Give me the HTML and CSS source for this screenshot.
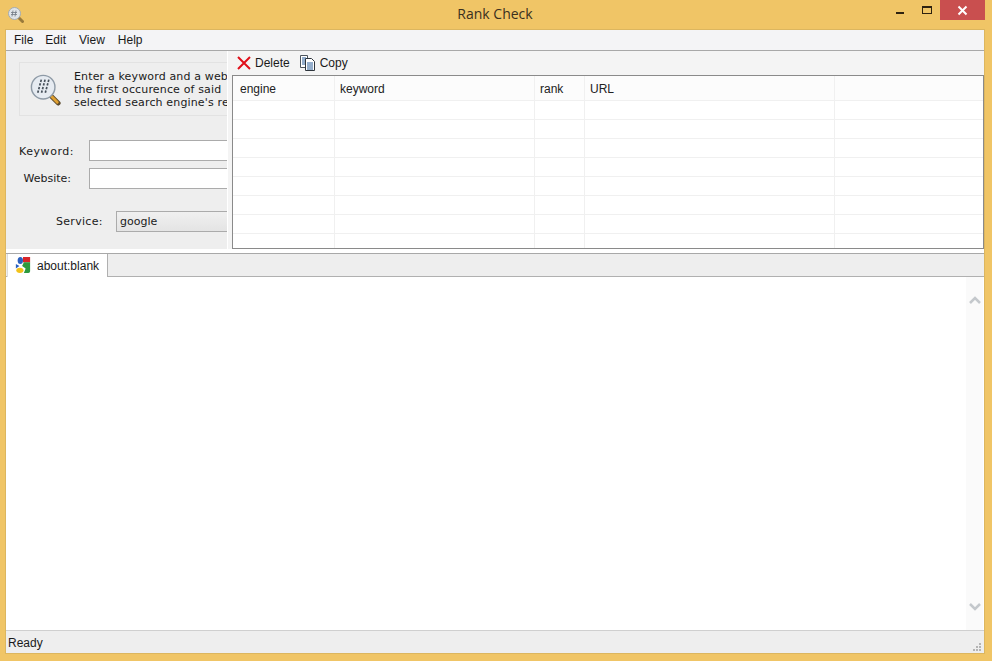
FILE: index.html
```html
<!DOCTYPE html>
<html>
	<head>
		<meta charset="UTF-8">
		<title>Rank Check</title>
		<link rel="stylesheet" href="styles.css">
	</head>
	<body>
		<div class="window">
			<div class="titlebar">
				<svg class="app-icon" width="16" height="16" viewBox="0 0 16 16">
					<path d="M10.500 10.500l4 4" stroke="#9a7a3a" stroke-width="3" stroke-linecap="round"/>
					<circle cx="6.500" cy="6.500" r="6" fill="#dfe4e8" stroke="#a3abb2"/>
					<path d="M5 3.500l-1 6M8 3.500l-1 6M3 5.500h6M3 7.500h6" stroke="#717a84" stroke-width=".8"/>
				</svg>
				<div class="title">Rank Check</div>
				<div class="controls">
					<div class="btn-min"><span></span></div>
					<div class="btn-max"><span></span></div>
					<div class="btn-close">
						<svg width="11" height="11" viewBox="0 0 11 11"><path d="M1.500 1.500l8 8M9.500 1.500l-8 8" stroke="#fff" stroke-width="2"/></svg>
					</div>
				</div>
			</div>

			<div class="client">
				<ul class="menu">
					<li>File</li>
					<li>Edit</li>
					<li>View</li>
					<li>Help</li>
				</ul>

				<div class="top">
					<div class="left">
						<div class="info">
							<svg class="info-icon" width="32" height="32" viewBox="0 0 34 34">
								<path d="M22 23l8 8" stroke="#5b4a2c" stroke-width="5" stroke-linecap="round"/>
								<path d="M23 24l6 6" stroke="#e0a030" stroke-width="3" stroke-linecap="round"/>
								<circle cx="14" cy="14" r="12.500" fill="#e6ebf1" stroke="#8e9aa6" stroke-width="1.500"/>
								<path d="M12 6l-4 15M16 6l-4 15M20 6l-4 15" stroke="#46505a" stroke-width="1.800" stroke-dasharray="2.500 1.500"/>
							</svg>
							<div class="info-text">
								<div>Enter a keyword and a website to find</div>
								<div>the first occurence of said</div>
								<div>selected search engine's results</div>
							</div>
						</div>
						<div class="form">
							<label class="label-key">Keyword:</label>
							<div class="field"></div>
							<label class="label-site">Website:</label>
							<div class="field"></div>
						</div>
						<div class="service">
							<label>Service:</label>
							<div class="select">google</div>
						</div>
					</div>

					<div class="right">
						<div class="toolbar">
							<div class="tool">
								<svg width="16" height="16" viewBox="0 0 16 16"><path d="M2 2l12 12M14 2L2 14" stroke="#e0101a" stroke-width="2"/></svg>
								Delete
							</div>
							<div class="tool">
								<svg width="16" height="18" viewBox="0 0 16 18">
									<path d="M.500 1.500h7v12h-7z" fill="#fff" stroke="#4c545c"/>
									<path d="M5.500 4.500h6l3 3v9h-9z" fill="#fff" stroke="#2e353c"/>
									<path d="M2 4h4M2 6h3M2 8h3M2 10h3M7 9h6M7 11h6M7 13h6M7 15h6" stroke="#2a5f9a"/>
								</svg>
								Copy
							</div>
						</div>
						<table class="results">
							<tr class="head">
								<td class="c1">engine</td>
								<td class="c2">keyword</td>
								<td class="c3">rank</td>
								<td class="c4">URL</td>
								<td></td>
							</tr>
							<tr><td></td><td></td><td></td><td></td><td></td></tr>
							<tr><td></td><td></td><td></td><td></td><td></td></tr>
							<tr><td></td><td></td><td></td><td></td><td></td></tr>
							<tr><td></td><td></td><td></td><td></td><td></td></tr>
							<tr><td></td><td></td><td></td><td></td><td></td></tr>
							<tr><td></td><td></td><td></td><td></td><td></td></tr>
							<tr><td></td><td></td><td></td><td></td><td></td></tr>
							<tr class="last"><td></td><td></td><td></td><td></td><td></td></tr>
						</table>
					</div>
				</div>

				<div class="tabs">
					<div class="tab">
						<svg width="16" height="16" viewBox="0 0 18 18">
							<rect x="9" y="0" width="8" height="6" fill="#d8262a"/>
							<path d="M10 6h7v10a2 2 0 0 1-2 2h-5l2-5-4-3z" fill="#2c9a3e"/>
							<ellipse cx="6" cy="4" rx="3" ry="4" fill="#2a5fc0"/>
							<path d="M1 8l4 2-4 3z" fill="#2a5fc0"/>
							<ellipse cx="5.500" cy="15" rx="4" ry="3" fill="#f2c21a"/>
						</svg>
						about:blank
					</div>
				</div>

				<div class="browser">
					<div class="page"></div>
					<div class="scroll">
						<svg width="12" height="8" viewBox="0 0 12 8"><path d="M1 7l5-5 5 5" fill="none" stroke="#c4c8cc" stroke-width="2.500"/></svg>
						<svg width="12" height="8" viewBox="0 0 12 8"><path d="M1 1l5 5 5-5" fill="none" stroke="#c4c8cc" stroke-width="2.500"/></svg>
					</div>
				</div>

				<div class="status">
					<span>Ready</span>
					<svg class="grip" width="10" height="10" viewBox="0 0 10 10"><path d="M7 1h2v2H7zM4 4h2v2H4zM7 4h2v2H7zM1 7h2v2H1zM4 7h2v2H4zM7 7h2v2H7z" fill="#b4b4b4"/></svg>
				</div>
			</div>
		</div>
	</body>
</html>
```

FILE: styles.css
```css
* {
	margin: 0;
	padding: 0;
	box-sizing: border-box;
}

html, body {
	width: 992px;
	height: 661px;
	overflow: hidden;
}

body {
	font-family: "DejaVu Sans", sans-serif;
	font-size: 11px;
	color: #1a1a1a;
}

ul, li {
	list-style: none;
}

.window {
	height: 661px;
	background: #f0c566;
	padding: 0 8px 8px 6px;
	display: flex;
	flex-direction: column;
}

.titlebar {
	height: 30px;
	flex: none;
	display: flex;
	align-items: flex-start;
	position: relative;
}

.app-icon {
	margin: 7px 0 0 2px;
}

.title {
	position: absolute;
	left: 0;
	right: 0;
	top: 4px;
	text-align: center;
	font-family: "Open Sans", sans-serif;
	font-size: 14px;
	line-height: 20px;
	color: #3a3020;
}

.controls {
	margin-left: auto;
	margin-right: -1px;
	display: flex;
}

.btn-min, .btn-max {
	width: 26px;
	height: 20px;
	display: flex;
	justify-content: center;
}

.btn-min span {
	width: 8px;
	height: 2px;
	margin-top: 12px;
	margin-right: 2px;
	background: #2e2210;
}

.btn-max span {
	width: 10px;
	height: 8px;
	margin-top: 6px;
	border: 1px solid #2e2210;
	border-top-width: 2px;
}

.btn-close {
	width: 45px;
	height: 20px;
	background: #c94f4f;
	display: flex;
	align-items: center;
	justify-content: center;
}

.client {
	flex: 1;
	min-height: 0;
	background: #fff;
	box-shadow: 0 0 0 1px #dcb65f;
	display: flex;
	flex-direction: column;
}

.menu {
	height: 21px;
	flex: none;
	display: flex;
	background: #f4f4f6;
	border-bottom: 1px solid #a8a8a8;
	padding-left: 8px;
	gap: 13px;
	font-family: "Liberation Sans", sans-serif;
	font-size: 12px;
	line-height: 20px;
}

.menu li:first-child {
	margin-right: -1px;
}

.top {
	height: 198px;
	flex: none;
	display: flex;
	background: #eeeeee;
	padding-left: 1px;
}

.left {
	width: 220px;
	flex: none;
	overflow: hidden;
	padding: 11px 0 0 12px;
	white-space: nowrap;
}

.info {
	width: 320px;
	height: 54px;
	border: 1px solid #e2e2e2;
	display: flex;
	align-items: center;
	padding-left: 10px;
	gap: 12px;
}

.info-icon {
	flex: none;
	margin-top: 2px;
}

.info-text {
	line-height: 13px;
	letter-spacing: .15px;
}

.form {
	margin-top: 24px;
	display: grid;
	grid-template-columns: 70px 300px;
	row-gap: 7px;
	align-items: center;
}

.form label {
	text-align: right;
	padding-right: 15px;
}

.form .label-key {
	letter-spacing: .55px;
	padding-top: 1px;
}

.form .label-site {
	padding-right: 18px;
}

.field {
	height: 21px;
	background: #fff;
	border: 1px solid #ababab;
}

.service {
	margin-top: 22px;
	display: flex;
	align-items: center;
}

.service label {
	width: 85px;
	flex: none;
	padding-left: 37px;
	letter-spacing: .3px;
}

.select {
	width: 300px;
	height: 21px;
	flex: none;
	margin-left: 12px;
	border: 1px solid #ababab;
	background: linear-gradient(#f0f0f0, #e4e4e4);
	line-height: 19px;
	padding-left: 3px;
}

.right {
	width: 757px;
	flex: none;
	padding-left: 4px;
	display: flex;
	flex-direction: column;
	background: #f4f4f4;
	border-left: 1px solid #fff;
}

.toolbar {
	height: 24px;
	flex: none;
	display: flex;
	align-items: center;
	gap: 10px;
	padding-left: 4px;
	font-family: "Liberation Sans", sans-serif;
	font-size: 12px;
}

.tool {
	display: flex;
	align-items: center;
	gap: 3px;
}

.tool + .tool {
	gap: 4px;
}

.results {
	width: 752px;
	table-layout: fixed;
	border-collapse: separate;
	border-spacing: 0;
	background: #fff;
	border: 1px solid #8a8a8a;
	font-family: "Liberation Sans", sans-serif;
	font-size: 12px;
}

.results td {
	height: 19px;
	border-right: 1px solid #f0f0f0;
	border-bottom: 1px solid #f0f0f0;
	padding: 0 0 0 5px;
}

.results td:last-child {
	border-right: none;
}

.results .head td {
	height: 25px;
	padding-top: 2px;
	background: #fcfcfc;
	color: #222;
}

.results .head .c1 {
	padding-left: 7px;
}

.results .last td {
	border-bottom: none;
	height: 14px;
}

.c1 {
	width: 102px;
}

.c2 {
	width: 200px;
}

.c3 {
	width: 50px;
}

.c4 {
	width: 250px;
}

.tabs {
	height: 24px;
	margin-top: 4px;
	flex: none;
	display: flex;
	background: #eeeeee;
	border-top: 1px solid #a8a8a8;
	border-bottom: 1px solid #b0b0b0;
	padding-left: 1px;
}

.tab {
	width: 101px;
	height: 23px;
	background: #fff;
	border-right: 1px solid #b0b0b0;
	border-left: 1px solid #dcdcdc;
	display: flex;
	align-items: center;
	padding-left: 7px;
	gap: 6px;
	font-family: "Liberation Sans", sans-serif;
	font-size: 12px;
}

.tab svg {
	margin-bottom: 2px;
}

.browser {
	flex: 1;
	min-height: 0;
	display: flex;
	background: #fff;
}

.page {
	flex: 1;
}

.scroll {
	width: 17px;
	margin-right: 1px;
	background: #fafafa;
	display: flex;
	flex-direction: column;
	justify-content: space-between;
	align-items: center;
	padding: 19px 0 19px;
}

.status {
	height: 23px;
	flex: none;
	display: flex;
	align-items: center;
	justify-content: space-between;
	background: #eeeeee;
	border-top: 1px solid #cfcfcf;
	padding: 2px 2px 0;
	font-family: "Liberation Sans", sans-serif;
	font-size: 12px;
}

.grip {
	align-self: flex-end;
	margin-bottom: 1px;
}
```
